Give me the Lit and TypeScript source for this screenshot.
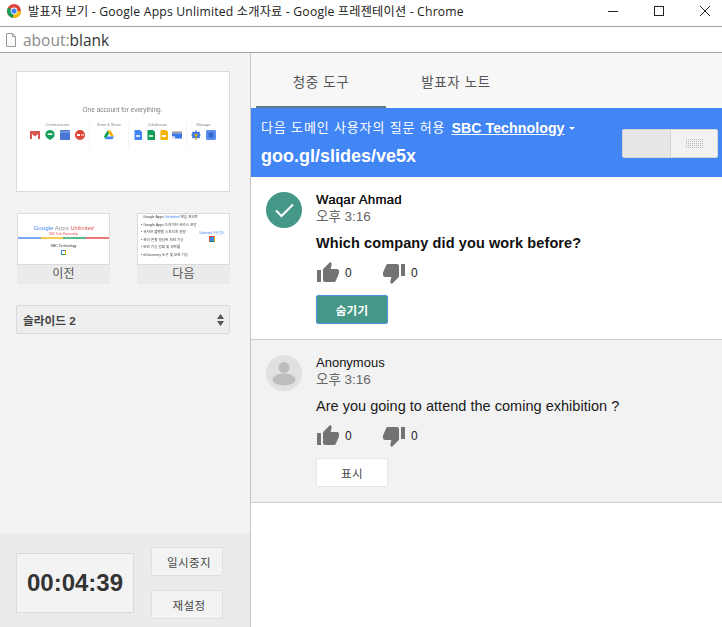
import { LitElement, html, css, svg } from "lit";
import { customElement } from "lit/decorators.js";

const UP = svg`<path d="M1 21h4V9H1v12zm22-11c0-1.1-.9-2-2-2h-6.31l.95-4.57.03-.32c0-.41-.17-.79-.44-1.06L14.17 1 7.59 7.59C7.22 7.95 7 8.45 7 9v10c0 1.1.9 2 2 2h9c.83 0 1.54-.5 1.84-1.22l3.02-7.05c.09-.23.14-.47.14-.73v-2z"/>`;
const DOWN = svg`<path d="M15 3H6c-.83 0-1.54.5-1.84 1.22l-3.02 7.05c-.09.23-.14.47-.14.73v2c0 1.1.9 2 2 2h6.31l-.95 4.57-.03.32c0 .41.17.79.44 1.06L9.83 23l6.59-6.59c.36-.36.58-.86.58-1.41V5c0-1.1-.9-2-2-2zm4 0v12h4V3h-4z"/>`;

@customElement("app-root")
export class AppRoot extends LitElement {
  static styles = css`
    :host { display: block; width: 722px; height: 627px; overflow: hidden; background: #fff; font-family: "Liberation Sans", "Noto Sans CJK KR", sans-serif; color: #111; }
    * { box-sizing: border-box; }
    .titlebar { height: 27px; border-bottom: 1px solid #a3a3a3; display: flex; align-items: center; background: #fff; padding-bottom: 5px; }
    .chrome-logo { width: 14px; height: 14px; margin: 0 7px 0 7px; flex: none; }
    .title { font: 12.2px "Open Sans", "Noto Sans CJK KR", sans-serif; color: #222; white-space: nowrap; flex: 1; letter-spacing: 0.19px; }
    .winbtns { display: flex; align-items: center; margin-right: -6px; }
    .winbtn { width: 46px; height: 20px; display: flex; align-items: center; justify-content: center; }
    .winbtn svg { width: 12px; height: 12px; }
    .addr { height: 26px; border-bottom: 1px solid #a3a3a3; display: flex; align-items: center; padding-left: 5px; font: 15.5px "Open Sans", sans-serif; }
    .addr svg { width: 12px; height: 16px; margin-right: 6px; flex: none; }
    .addr .dim { color: #8a8a8a; }
    .addr .dark { color: #333; }
    .main { display: flex; height: 574px; }
    .side { width: 251px; flex: none; background: #f3f3f3; border-right: 1px solid #c6c6c6; display: flex; flex-direction: column; padding-top: 18px; }
    .big { width: 214px; height: 121px; margin-left: 16px; background: #fff; border: 1px solid #dadada; display: flex; flex-direction: column; align-items: center; padding-top: 33px; color: #777; }
    .big .head { font-size: 6.5px; line-height: 10px; margin-left: -1px; color: #808080; filter: grayscale(1); }
    .cats { display: flex; margin-top: 8px; font-size: 3.8px; color: #888; filter: blur(0.25px); }
    .cat { display: flex; flex-direction: column; align-items: center; padding: 0 4px; gap: 3px; border-right: 1px solid #f5f5f5; height: 25px; white-space: nowrap; }
    .cat:last-child { border-right: 0; }
    .cat.store { padding: 0 7px; }
    .cat .ics { display: flex; gap: 5px; }
    .cat.collab .ics { gap: 3px; }
    .ic { width: 10px; height: 10px; border-radius: 1px; display: block; }
    .thumbs { display: flex; justify-content: space-between; margin: 21px 20px 0 17px; }
    .thumb { width: 93px; height: 71px; background: #ebebeb; display: flex; flex-direction: column; align-items: center; font-size: 12px; color: #555; }
    .shot { width: 93px; height: 52px; border: 1px solid #dadada; background: #fff; overflow: hidden; flex: none; display: flex; flex-direction: column; filter: blur(0.25px); }
    .thumb-label { line-height: 18px; height: 19px; font-size: 12px; letter-spacing: 0.2px; }
    .gl { font-size: 6.2px; text-align: center; margin-top: 10px; line-height: 8px; color: #999; }
    .gl b { font-weight: 400; color: #4285f4; }
    .gl i { color: #d9534f; font-size: 5.5px; }
    .sub { font-size: 3px; color: #d9534f; text-align: center; line-height: 4px; }
    .rainbow { height: 2px; margin-top: 1px; background: linear-gradient(90deg, #4285f4 0 25%, #f4b400 25% 50%, #0f9d58 50% 75%, #db4437 75%); opacity: 0.7; }
    .sbc { font-size: 3.5px; text-align: center; margin-top: 5px; line-height: 5px; color: #333; }
    .mini { width: 5px; height: 5px; margin: 1px auto 0; border: 1px solid #4285f4; border-right-color: #f4b400; border-bottom-color: #0f9d58; }
    .next { padding: 0 3px; font-size: 3.6px; color: #444; line-height: 7.6px; position: relative; white-space: nowrap; }
    .next .blue { color: #4285f4; }
    .next-head { margin-left: 2px; }
    .next .box { position: absolute; right: 4px; top: 17px; width: 26px; color: #4285f4; font-size: 3px; line-height: 4px; text-align: center; }
    .next .box span { display: block; width: 6px; height: 6px; margin: 1px auto; border: 1px solid #db4437; border-right-color: #f4b400; border-bottom-color: #0f9d58; background: #4285f4; }
    .select { margin: 21px 0 0 16px; width: 214px; height: 29px; border: 1px solid #d8d8d8; border-radius: 2px; background: #eeeeee; display: flex; align-items: center; justify-content: space-between; padding: 0 4px 0 6px; font-size: 11.7px; font-weight: 700; color: #444; }
    .select svg { width: 9px; height: 16px; }
    .foot { margin-top: auto; height: 94px; background: #ebebeb; display: flex; padding: 14px 0 0 16px; gap: 17px; }
    .timer { width: 118px; height: 60px; margin-top: 6px; background: #f3f3f3; border: 1px solid #dadada; display: flex; align-items: center; justify-content: center; font-size: 24px; font-weight: 700; color: #333; }
    .foot-btns { display: flex; flex-direction: column; gap: 14px; }
    .fbtn { width: 72px; height: 29px; background: #f3f3f3; border: 1px solid #dfdfdf; border-radius: 2px; display: flex; align-items: center; justify-content: center; font-size: 11.5px; color: #444; letter-spacing: 0.4px; padding-left: 4px; }
    .right { flex: 1; min-width: 0; display: flex; flex-direction: column; }
    .tabs { height: 55px; background: #f7f7f7; display: flex; padding-left: 5px; }
    .tab { width: 130px; display: flex; align-items: center; justify-content: center; font-size: 13.5px; color: #555; letter-spacing: 0.6px; padding-top: 3px; border-bottom: 2px solid transparent; }
    .tab.on { border-bottom-color: #5f7a8a; }
    .tab.off { margin-left: 5px; }
    .band { height: 69px; background: #4285f4; color: #fff; display: flex; justify-content: space-between; padding: 0 4px 0 10px; }
    .band-l { display: flex; flex-direction: column; padding-top: 11px; }
    .allow { font-size: 13px; line-height: 18px; display: flex; align-items: center; white-space: nowrap; letter-spacing: 0.85px; }
    .allow u { font-weight: 700; font-size: 14.2px; margin-left: 6px; letter-spacing: 0.05px; }
    .caret { width: 0; height: 0; border: 3px solid transparent; border-top: 3px solid #fff; border-bottom: 0; margin-left: 4px; }
    .url { font-size: 18px; font-weight: 700; line-height: 22px; margin-top: 8px; }
    .switch { width: 96px; height: 29px; margin-top: 21px; display: flex; background: #f2f2f2; border: 1px solid #d5d5d5; border-radius: 2px; }
    .sw-off { width: 48px; background: #e6e6e6; border-right: 1px solid #d3d3d3; }
    .sw-on { flex: 1; display: flex; align-items: center; justify-content: center; padding-left: 1px; }
    .dots { width: 18px; height: 10px; display: block; }
    .q { height: 163px; border-bottom: 1px solid #cfcfcf; display: flex; padding: 15px 0 0 15px; gap: 14px; background: #fff; }
    .q.alt { background: #f2f2f2; }
    .av { width: 36px; height: 36px; border-radius: 50%; flex: none; display: flex; align-items: center; justify-content: center; }
    .av.ok { background: #459888; }
    .av.anon { background: #e0e0e0; }
    .av svg { width: 36px; height: 36px; }
    .body { display: flex; flex-direction: column; align-items: flex-start; padding-top: 1px; }
    .name { font-size: 13px; line-height: 14px; color: #111; }
    .q.first .name { letter-spacing: 0.35px; text-shadow: 0.3px 0 0 #111; }
    .time { font-size: 13.5px; line-height: 16px; color: #666; margin-top: 2px; }
    .text { font-size: 14.5px; line-height: 18px; margin-top: 9px; color: #1a1a1a; letter-spacing: 0.02px; }
    .q.first .text { font-weight: 700; color: #111; letter-spacing: 0.1px; }
    .votes { display: flex; align-items: center; height: 24px; margin: 9px 0 0 1px; }
    .v { width: 66px; display: flex; align-items: center; gap: 6px; font-size: 12px; color: #222; }
    .v svg { width: 22px; height: 22px; fill: #737373; flex: none; }
    .btn { width: 72px; height: 29px; margin-top: 10px; border-radius: 2px; display: flex; align-items: center; justify-content: center; font-size: 11.5px; letter-spacing: 0.3px; }
    .btn.hide { background: #459888; color: #fff; font-weight: 700; border: 1px solid #4d8fe0; }
    .btn.show { background: #fff; color: #444; border: 1px solid #e6e6e6; }
  `;

  private vote() {
    return html`<div class="votes">
      <div class="v"><svg viewBox="1 1 22 22">${UP}</svg>0</div>
      <div class="v"><svg viewBox="1 1 22 22">${DOWN}</svg>0</div>
    </div>`;
  }

  private bigSlide() {
    return html`<div class="big">
      <div class="head">One account for everything.</div>
      <div class="cats">
        <div class="cat">Communicate<div class="ics">
          <svg class="ic" viewBox="0 0 10 10"><path d="M0 1h10v8H8V4L5 6.5 2 4v5H0z" fill="#d9534f"/></svg>
          <svg class="ic" viewBox="0 0 10 10"><circle cx="5" cy="4.6" r="4.6" fill="#0f9d58"/><path d="M3 9h3v1z" fill="#0f9d58"/><rect x="2.6" y="3.4" width="4.8" height="1.6" fill="#fff"/></svg>
          <svg class="ic" viewBox="0 0 10 10"><rect width="10" height="10" fill="#4a76d4"/><rect y="1.5" width="10" height="1" fill="#8fa9e6"/></svg>
          <svg class="ic" viewBox="0 0 10 10"><circle cx="5" cy="5" r="5" fill="#db4437"/><rect x="2" y="4" width="3" height="2" fill="#fff"/><rect x="6" y="4.5" width="3" height="1" fill="#fff"/></svg>
        </div></div>
        <div class="cat store">Store &amp; Share<div class="ics">
          <svg class="ic" viewBox="0 0 10 10"><path d="M3.4 .6h3.2L10 6.4H6.8z" fill="#f4b400"/><path d="M3.4 .6 0 6.4l1.6 2.8L5 3.4z" fill="#0f9d58"/><path d="M1.6 9.2h6.8L10 6.4H3.2z" fill="#4285f4"/></svg>
        </div></div>
        <div class="cat collab">Collaborate<div class="ics">
          <svg class="ic" viewBox="0 0 10 10"><path d="M1.5 0H7l2 2v8H1.5z" fill="#4285f4"/><rect x="3" y="5" width="4" height="2" fill="#cfe0fb"/></svg>
          <svg class="ic" viewBox="0 0 10 10"><path d="M1.5 0H7l2 2v8H1.5z" fill="#0f9d58"/><rect x="3" y="5" width="4" height="2" fill="#c8ecd9"/></svg>
          <svg class="ic" viewBox="0 0 10 10"><path d="M1.5 0H7l2 2v8H1.5z" fill="#f4b400"/><rect x="3" y="5" width="4" height="2" fill="#fff"/></svg>
          <svg class="ic" viewBox="0 0 10 10"><rect y="1.5" width="10" height="2" fill="#999"/><rect x="3" y="3.5" width="7" height="5" fill="#3b78e7"/><rect y="3.5" width="3" height="3" fill="#3b78e7"/><rect y="6.5" width="3" height="2" fill="#ddd"/></svg>
        </div></div>
        <div class="cat">Manage<div class="ics">
          <svg class="ic" viewBox="0 0 10 10"><path d="M5 0l1.2 2L9 1.8 8.6 4 10 5 8.6 6l.4 2.2L6.2 8 5 10 3.8 8 1 8.2 1.4 6 0 5l1.4-1L1 1.8 3.8 2z" fill="#3b78e7"/><path d="M3.6 3v2.4L5 6.6 6.4 5.4V3l-1 1.2h-.8zM4.4 6h1.2v3.4H4.4z" fill="#f4b400"/></svg>
          <svg class="ic" viewBox="0 0 10 10"><rect width="10" height="10" rx="1" fill="#5b8def"/><rect x="2.6" y="2.6" width="4.8" height="4.8" fill="#2f66cf"/></svg>
        </div></div>
      </div>
    </div>`;
  }

  render() {
    return html`
      <div class="titlebar">
        <svg class="chrome-logo" viewBox="0 0 14 14">
          <circle cx="7" cy="7" r="7" fill="#db4437"/>
          <path d="M7 7 1 3.6A7 7 0 0 0 6 13.9z" fill="#0f9d58"/>
          <path d="M7 7h7a7 7 0 0 1-8 6.9z" fill="#f4c20d"/>
          <circle cx="7" cy="7" r="3.4" fill="#fff"/>
          <circle cx="7" cy="7" r="2.6" fill="#4285f4"/>
        </svg>
        <div class="title">발표자 보기 - Google Apps Unlimited 소개자료 - Google 프레젠테이션 - Chrome</div>
        <div class="winbtns">
          <div class="winbtn"><svg viewBox="0 0 12 12"><path d="M1 6.5h10" stroke="#222" fill="none"/></svg></div>
          <div class="winbtn"><svg viewBox="0 0 12 12"><rect x="1.5" y="1.5" width="9" height="9" stroke="#222" fill="none"/></svg></div>
          <div class="winbtn"><svg viewBox="0 0 12 12"><path d="M1 1l10 10M11 1 1 11" stroke="#222" fill="none"/></svg></div>
        </div>
      </div>
      <div class="addr">
        <svg viewBox="0 0 12 16"><path d="M1.5 1.5h6l3 3v10h-9z" fill="#fafafa" stroke="#9a9a9a"/><path d="M7.5 1.5v3h3" fill="none" stroke="#9a9a9a"/></svg>
        <span class="dim">about:</span><span class="dark">blank</span>
      </div>
      <div class="main">
        <div class="side">
          ${this.bigSlide()}
          <div class="thumbs">
            <div class="thumb">
              <div class="shot">
                <div class="gl"><b>Google</b> Apps <i>Unlimited</i></div>
                <div class="sub">SBC Tech Partnership</div>
                <div class="rainbow"></div>
                <div class="sbc">SBC Technology</div>
                <div class="mini"></div>
              </div>
              <div class="thumb-label">이전</div>
            </div>
            <div class="thumb">
              <div class="shot next">
                <div class="next-head">Google Apps <span class="blue">Unlimited</span> 핵심 포인트</div>
                <div>• Google Apps 드라이브 서비스 포함</div>
                <div>• 유사한 플랫폼 스토리지 용량</div>
                <div>• 관리 콘솔 향상된 보안 기능</div>
                <div>• 보안 기능 강화 및 컨트롤</div>
                <div>• eDiscovery 도구 및 보관 기능</div>
                <div class="box">Unlimited 구글 앱스<span></span></div>
              </div>
              <div class="thumb-label">다음</div>
            </div>
          </div>
          <div class="select">
            <span>슬라이드 2</span>
            <svg viewBox="0 0 9 16"><path d="M4.5 2 8 7H1zM4.5 14 1 9h7z" fill="#555"/></svg>
          </div>
          <div class="foot">
            <div class="timer">00:04:39</div>
            <div class="foot-btns">
              <div class="fbtn">일시중지</div>
              <div class="fbtn">재설정</div>
            </div>
          </div>
        </div>
        <div class="right">
          <div class="tabs">
            <div class="tab on">청중 도구</div>
            <div class="tab off">발표자 노트</div>
          </div>
          <div class="band">
            <div class="band-l">
              <div class="allow">다음 도메인 사용자의 질문 허용 <u>SBC Technology</u><span class="caret"></span></div>
              <div class="url">goo.gl/slides/ve5x</div>
            </div>
            <div class="switch">
              <div class="sw-off"></div>
              <div class="sw-on">
                <svg class="dots" viewBox="0 0 18 10">
                  <defs><pattern id="d" width="2" height="2" patternUnits="userSpaceOnUse"><rect width="1" height="1" fill="#b8b8b8"/></pattern></defs>
                  <rect width="18" height="10" fill="url(#d)"/>
                </svg>
              </div>
            </div>
          </div>
          <div class="q first">
            <div class="av ok"><svg viewBox="0 0 36 36"><path d="M10 18.5l5.5 5.5L27 12.5" fill="none" stroke="#fff" stroke-width="2"/></svg></div>
            <div class="body">
              <div class="name">Waqar Ahmad</div>
              <div class="time">오후 3:16</div>
              <div class="text">Which company did you work before?</div>
              ${this.vote()}
              <div class="btn hide">숨기기</div>
            </div>
          </div>
          <div class="q alt">
            <div class="av anon"><svg viewBox="0 0 36 36"><circle cx="18" cy="12.5" r="5.5" fill="#bdbdbd"/><ellipse cx="18" cy="24.5" rx="11.5" ry="6" fill="#bdbdbd"/></svg></div>
            <div class="body">
              <div class="name">Anonymous</div>
              <div class="time">오후 3:16</div>
              <div class="text">Are you going to attend the coming exhibition ?</div>
              ${this.vote()}
              <div class="btn show">표시</div>
            </div>
          </div>
        </div>
      </div>
    `;
  }
}
